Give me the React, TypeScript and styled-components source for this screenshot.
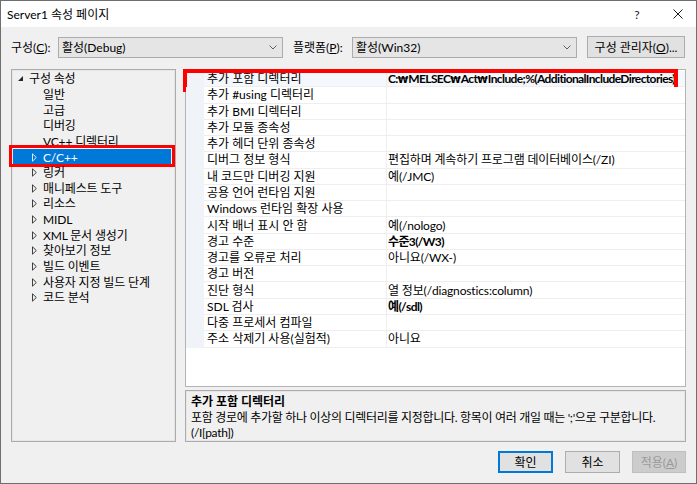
import React from "react";
import styled, { createGlobalStyle } from "styled-components";

const GlobalStyle = createGlobalStyle`
  html, body {
    margin: 0;
    padding: 0;
    background: #ffffff;
  }
  body {
    font-family: Lato, "DejaVu Sans", "Noto Sans CJK KR", sans-serif;
    font-size: 12px;
    line-height: 15px;
    color: #000000;
  }
  * {
    box-sizing: border-box;
  }
`;

const Window = styled.div`
  width: 697px;
  height: 484px;
  border: 1px solid #6f6f6f;
  background: #f0f0f0;
  display: flex;
  flex-direction: column;
  overflow: hidden;
`;

const TitleBar = styled.div`
  height: 26px;
  flex: none;
  background: #ffffff;
  display: flex;
  align-items: center;
  padding-left: 6px;
  white-space: nowrap;
`;

const TitleText = styled.div`
  flex: 1;
`;

const TitleGlyph = styled.div<{ $w: number }>`
  width: ${(p) => p.$w}px;
  height: 26px;
  display: flex;
  align-items: center;
  justify-content: center;
  color: #1a1a1a;
`;

const TopRow = styled.div`
  display: flex;
  align-items: center;
  height: 22px;
  margin: 9px 10px 0 10px;
  flex: none;
  white-space: nowrap;
`;

const FieldLabel = styled.div<{ $w: number; $pl?: number }>`
  width: ${(p) => p.$w}px;
  padding-left: ${(p) => p.$pl ?? 0}px;
  flex: none;
`;

const Combo = styled.div`
  width: 225px;
  height: 21px;
  flex: none;
  border: 1px solid #acacac;
  background: #e5e5e5;
  display: flex;
  align-items: center;
  justify-content: space-between;
  padding: 0 5px 0 3px;
`;

const PushButton = styled.div<{ $w: number; $variant?: "default" | "disabled" }>`
  width: ${(p) => p.$w}px;
  height: 22px;
  flex: none;
  display: flex;
  align-items: center;
  justify-content: center;
  white-space: nowrap;
  background: ${(p) => (p.$variant === "disabled" ? "#cccccc" : "#e1e1e1")};
  color: ${(p) => (p.$variant === "disabled" ? "#9a9a9a" : "#000000")};
  border: 1px solid
    ${(p) =>
      p.$variant === "default" ? "#0078d7" : p.$variant === "disabled" ? "#bfbfbf" : "#adadad"};
  box-shadow: ${(p) => (p.$variant === "default" ? "inset 0 0 0 1px #0078d7" : "none")};
`;

const Main = styled.div`
  display: flex;
  gap: 9px;
  height: 373px;
  margin: 11px 10px 0 10px;
  flex: none;
`;

const TreePanel = styled.div`
  width: 165px;
  flex: none;
  border: 1px solid #acacac;
  box-shadow: inset 0 0 0 1px #e6e6e6;
  background: #f0f0f0;
  padding-top: 1px;
`;

const TreeRow = styled.div<{ $indent: number; $selected?: boolean }>`
  position: relative;
  height: 15.65px;
  margin: 0 4px 0 1px;
  padding-left: ${(p) => p.$indent}px;
  display: flex;
  align-items: center;
  white-space: nowrap;
  letter-spacing: -0.15px;
  background: ${(p) => (p.$selected ? "#0078d7" : "transparent")};
  color: ${(p) => (p.$selected ? "#ffffff" : "#000000")};

  ${(p) =>
    p.$selected &&
    `
    &::after {
      content: "";
      position: absolute;
      left: -4px;
      right: -4px;
      top: -4px;
      bottom: -2px;
      border: 3px solid #ff0000;
    }
  `}
`;

const Twisty = styled.span`
  width: 11px;
  flex: none;
  display: flex;
  align-items: center;
`;

const RightColumn = styled.div`
  width: 501px;
  flex: none;
  display: flex;
  flex-direction: column;
  gap: 3px;
`;

const Grid = styled.div`
  height: 318px;
  flex: none;
  border: 1px solid #b4b4b4;
  background: #ffffff;
  padding-top: 1px;
`;

const GridRow = styled.div<{ $focused?: boolean }>`
  position: relative;
  display: grid;
  grid-template-columns: 18px 182px 1fr;
  height: 16.28px;
  white-space: nowrap;
  background: ${(p) => (p.$focused ? "#f4f7fc" : "#ffffff")};

  ${(p) =>
    p.$focused &&
    `
    &::after {
      content: "";
      position: absolute;
      left: -3px;
      right: 7px;
      top: -2px;
      bottom: -5px;
      border: 4px solid #ff0000;
    }
  `}
`;

const Gutter = styled.div`
  background: #f0f3f8;
`;

const NameCell = styled.div`
  display: flex;
  align-items: center;
  padding-left: 3px;
  border-bottom: 1px solid #eeeeee;
  overflow: hidden;
`;

const ValueCell = styled.div<{ $bold?: boolean }>`
  display: flex;
  align-items: center;
  padding-left: 1px;
  border-left: 1px solid #eeeeee;
  border-bottom: 1px solid #eeeeee;
  font-weight: ${(p) => (p.$bold ? 700 : 400)};
  letter-spacing: ${(p) => (p.$bold ? "-0.62px" : "-0.15px")};
  overflow: hidden;
`;

const WonSign = styled.span`
  display: inline-block;
  width: 10.5px;
  text-align: center;
  letter-spacing: 0;
  font-family: "DejaVu Sans", sans-serif;
  font-size: 9.5px;
`;

const DescBox = styled.div`
  height: 52px;
  flex: none;
  border: 1px solid #acacac;
  box-shadow: inset 0 0 0 1px #e6e6e6;
  background: #f0f0f0;
  padding: 3px 5px 0 5px;
  line-height: 15.5px;
  letter-spacing: -0.3px;
  white-space: nowrap;
`;

const DescTitle = styled.div`
  font-weight: 700;
  letter-spacing: 0;
`;

const Footer = styled.div`
  display: flex;
  justify-content: flex-end;
  gap: 12px;
  height: 22px;
  margin: 9px 10px 0 10px;
  flex: none;
`;

const ChevronDown = () => (
  <svg width="8" height="5" viewBox="0 0 8 5">
    <path d="M0.5 0.5 L4 4 L7.5 0.5" fill="none" stroke="#606060" strokeWidth="1" />
  </svg>
);

const Collapsed = ({ color }: { color: string }) => (
  <svg width="5" height="9" viewBox="0 0 5 9">
    <path d="M0.5 0.8 L4.3 4.5 L0.5 8.2 Z" fill="none" stroke={color} strokeWidth="1" />
  </svg>
);

const Expanded = () => (
  <svg width="5" height="5" viewBox="0 0 5 5">
    <polygon points="5,0 5,5 0,5" fill="#262626" />
  </svg>
);

// the Korean code page shows the path separator as a won sign
const renderValue = (value: string) =>
  value.split("₩").map((part, i) => (
    <React.Fragment key={i}>
      {i > 0 && <WonSign>₩</WonSign>}
      {part}
    </React.Fragment>
  ));

type TreeItem = { label: string; level: number; kind: "open" | "closed" | "leaf"; selected?: boolean };

const treeItems: TreeItem[] = [
  { label: "구성 속성", level: 0, kind: "open" },
  { label: "일반", level: 1, kind: "leaf" },
  { label: "고급", level: 1, kind: "leaf" },
  { label: "디버깅", level: 1, kind: "leaf" },
  { label: "VC++ 디렉터리", level: 1, kind: "leaf" },
  { label: "C/C++", level: 1, kind: "closed", selected: true },
  { label: "링커", level: 1, kind: "closed" },
  { label: "매니페스트 도구", level: 1, kind: "closed" },
  { label: "리소스", level: 1, kind: "closed" },
  { label: "MIDL", level: 1, kind: "closed" },
  { label: "XML 문서 생성기", level: 1, kind: "closed" },
  { label: "찾아보기 정보", level: 1, kind: "closed" },
  { label: "빌드 이벤트", level: 1, kind: "closed" },
  { label: "사용자 지정 빌드 단계", level: 1, kind: "closed" },
  { label: "코드 분석", level: 1, kind: "closed" },
];

type Prop = { name: string; value?: string; bold?: boolean };

const props: Prop[] = [
  { name: "추가 포함 디렉터리", value: "C:₩MELSEC₩Act₩Include;%(AdditionalIncludeDirectories)", bold: true },
  { name: "추가 #using 디렉터리" },
  { name: "추가 BMI 디렉터리" },
  { name: "추가 모듈 종속성" },
  { name: "추가 헤더 단위 종속성" },
  { name: "디버그 정보 형식", value: "편집하며 계속하기 프로그램 데이터베이스(/ZI)" },
  { name: "내 코드만 디버깅 지원", value: "예(/JMC)" },
  { name: "공용 언어 런타임 지원" },
  { name: "Windows 런타임 확장 사용" },
  { name: "시작 배너 표시 안 함", value: "예(/nologo)" },
  { name: "경고 수준", value: "수준3(/W3)", bold: true },
  { name: "경고를 오류로 처리", value: "아니요(/WX-)" },
  { name: "경고 버전" },
  { name: "진단 형식", value: "열 정보(/diagnostics:column)" },
  { name: "SDL 검사", value: "예(/sdl)", bold: true },
  { name: "다중 프로세서 컴파일" },
  { name: "주소 삭제기 사용(실험적)", value: "아니요" },
];

const App = () => (
  <>
    <GlobalStyle />
    <Window>
      <TitleBar>
        <TitleText>Server1 속성 페이지</TitleText>
        <TitleGlyph $w={46}>?</TitleGlyph>
        <TitleGlyph $w={36}>
          <svg width="10" height="10" viewBox="0 0 10 10">
            <path d="M0.5 0.5 L9.5 9.5 M9.5 0.5 L0.5 9.5" stroke="#1a1a1a" strokeWidth="1" />
          </svg>
        </TitleGlyph>
      </TitleBar>

      <TopRow>
        <FieldLabel $w={47}>
          구성(<u>C</u>):
        </FieldLabel>
        <Combo>
          <span>활성(Debug)</span>
          <ChevronDown />
        </Combo>
        <FieldLabel $w={69} $pl={10}>
          플랫폼(<u>P</u>):
        </FieldLabel>
        <Combo>
          <span>활성(Win32)</span>
          <ChevronDown />
        </Combo>
        <FieldLabel $w={10} />
        <PushButton $w={98}>
          구성 관리자(<u>O</u>)...
        </PushButton>
      </TopRow>

      <Main>
        <TreePanel>
          {treeItems.map((item) => (
            <TreeRow
              key={item.label}
              $indent={item.level === 0 ? 5 : item.kind === "leaf" ? 30 : 19}
              $selected={item.selected}
            >
              {item.kind !== "leaf" && (
                <Twisty>
                  {item.kind === "open" ? (
                    <Expanded />
                  ) : (
                    <Collapsed color={item.selected ? "#d8e8f8" : "#404040"} />
                  )}
                </Twisty>
              )}
              {item.label}
            </TreeRow>
          ))}
        </TreePanel>

        <RightColumn>
          <Grid>
            {props.map((p, i) => (
              <GridRow key={p.name} $focused={i === 0}>
                <Gutter />
                <NameCell>{p.name}</NameCell>
                <ValueCell $bold={p.bold}>
                  <span>{p.value ? renderValue(p.value) : ""}</span>
                </ValueCell>
              </GridRow>
            ))}
          </Grid>
          <DescBox>
            <DescTitle>추가 포함 디렉터리</DescTitle>
            <div>포함 경로에 추가할 하나 이상의 디렉터리를 지정합니다. 항목이 여러 개일 때는 ';'으로 구분합니다.</div>
            <div>(/I[path])</div>
          </DescBox>
        </RightColumn>
      </Main>

      <Footer>
        <PushButton $w={55} $variant="default">
          확인
        </PushButton>
        <PushButton $w={55}>취소</PushButton>
        <PushButton $w={54} $variant="disabled">
          적용(<u>A</u>)
        </PushButton>
      </Footer>
    </Window>
  </>
);

export default App;
